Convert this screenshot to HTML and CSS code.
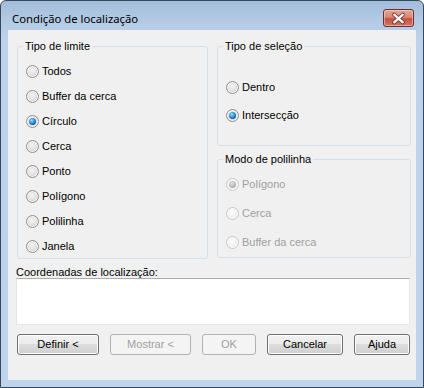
FILE: index.html
```html
<!DOCTYPE html>
<html lang="pt">
<head>
<meta charset="utf-8">
<title>Condição de localização</title>
<link rel="stylesheet" href="styles.css">
</head>
<body>
<div class="window">
  <div class="titlebar">
    <span class="title">Condição de localização</span>
    <span class="close">
      <svg width="30" height="17" viewBox="0 0 30 17">
        <path d="M10.5 4.5 L19.5 12.5 M19.5 4.5 L10.5 12.5" stroke="#6b3030" stroke-width="4" stroke-linecap="round" fill="none"/>
        <path d="M10.5 4.5 L19.5 12.5 M19.5 4.5 L10.5 12.5" stroke="#ffffff" stroke-width="2.2" stroke-linecap="round" fill="none"/>
      </svg>
    </span>
  </div>
  <div class="client">
    <div class="top">
      <div class="group g-limite">
        <span class="legend">Tipo de limite</span>
        <div class="opt"><span class="radio"></span>Todos</div>
        <div class="opt"><span class="radio"></span>Buffer da cerca</div>
        <div class="opt"><span class="radio checked"></span>Círculo</div>
        <div class="opt"><span class="radio"></span>Cerca</div>
        <div class="opt"><span class="radio"></span>Ponto</div>
        <div class="opt"><span class="radio"></span>Polígono</div>
        <div class="opt"><span class="radio"></span>Polilinha</div>
        <div class="opt"><span class="radio"></span>Janela</div>
      </div>
      <div class="col">
        <div class="group g-selecao">
          <span class="legend">Tipo de seleção</span>
          <div class="opt"><span class="radio"></span>Dentro</div>
          <div class="opt"><span class="radio checked"></span>Intersecção</div>
        </div>
        <div class="group g-modo">
          <span class="legend">Modo de polilinha</span>
          <div class="opt disabled"><span class="radio checked"></span>Polígono</div>
          <div class="opt disabled"><span class="radio"></span>Cerca</div>
          <div class="opt disabled"><span class="radio"></span>Buffer da cerca</div>
        </div>
      </div>
    </div>
    <div class="coord-label">Coordenadas de localização:</div>
    <div class="textbox"></div>
    <div class="buttons">
      <span class="btn b-definir">Definir &lt;</span>
      <span class="btn b-mostrar disabled">Mostrar &lt;</span>
      <span class="btn b-ok disabled">OK</span>
      <span class="btn b-cancelar">Cancelar</span>
      <span class="btn b-ajuda">Ajuda</span>
    </div>
  </div>
</div>
</body>
</html>
```

FILE: styles.css
```css
html, body {
  margin: 0;
  padding: 0;
  background: #ffffff;
}

body {
  width: 424px;
  height: 388px;
  font-family: "Liberation Sans", Arial, sans-serif;
  font-size: 11px;
  color: #000;
}

.window {
  box-sizing: border-box;
  width: 424px;
  height: 388px;
  border: 1px solid #36485c;
  border-radius: 6px 6px 0 0;
  background: linear-gradient(to bottom, #a3bcd9 0px, #b3cae4 20px, #bdd3ec 40px, #bed4ed 100%);
  display: flex;
  flex-direction: column;
}

.titlebar {
  height: 29px;
  display: flex;
  align-items: flex-start;
  justify-content: space-between;
  padding: 0 9px 0 11px;
}

.title {
  font-family: "Noto Sans", "Open Sans", sans-serif;
  font-size: 11.3px;
  line-height: 16px;
  margin-top: 10px;
  color: #000;
}

.close {
  box-sizing: border-box;
  width: 31px;
  height: 18px;
  margin-top: 8px;
  border: 1px solid #6a2f2f;
  border-radius: 3px;
  background: linear-gradient(to bottom, #e5a797 0%, #d88676 45%, #c6503f 55%, #d27566 100%);
  box-shadow: inset 0 0 0 1px rgba(255, 220, 210, 0.5);
  display: flex;
  align-items: center;
  justify-content: center;
}

.close svg {
  display: block;
}

.client {
  box-sizing: border-box;
  width: 408px;
  height: 350px;
  margin-left: 7px;
  background: #f0f0f0;
  padding: 16px 0 0 9px;
  position: relative;
}

.top {
  display: flex;
  gap: 9px;
}

.col {
  display: flex;
  flex-direction: column;
  gap: 13px;
}

.group {
  box-sizing: border-box;
  position: relative;
  border: 1px solid #d5dfe5;
  border-radius: 3px;
  padding-left: 8px;
}

.legend {
  position: absolute;
  top: -7px;
  left: 5px;
  padding: 0 2px;
  line-height: 13px;
  background: #f0f0f0;
}

.g-limite {
  width: 191px;
  height: 213px;
  padding-top: 12px;
}

.g-limite .opt {
  height: 25px;
}

.g-selecao {
  width: 194px;
  height: 100px;
  padding-top: 26px;
}

.g-selecao .opt {
  height: 28px;
}

.g-modo {
  width: 194px;
  height: 99px;
  padding-top: 10px;
}

.g-modo .opt {
  height: 29px;
}

.opt {
  display: flex;
  align-items: center;
  gap: 3px;
  line-height: 13px;
}

.opt.disabled {
  color: #a0a0a0;
}

.radio {
  box-sizing: border-box;
  width: 13px;
  height: 13px;
  border-radius: 50%;
  border: 1px solid #8f8f8f;
  background: radial-gradient(circle at 45% 40%, #f4f4f4 0%, #e2e2e2 45%, #d2d2d2 70%, #f0f0f0 100%);
  box-shadow: inset 0 0 0 1px #f6f6f6;
  position: relative;
  flex: none;
}

.radio.checked::after {
  content: "";
  position: absolute;
  left: 2px;
  top: 2px;
  width: 7px;
  height: 7px;
  border-radius: 50%;
  background: radial-gradient(circle at 40% 35%, #9be0ff 0%, #2f8fd8 45%, #0d4f94 80%, #0a3563 100%);
}

.opt.disabled .radio {
  border-color: #c6c6c6;
  background: radial-gradient(circle at 45% 40%, #fbfbfb 0%, #efefef 60%, #f6f6f6 100%);
  box-shadow: inset 0 0 0 1px #fafafa;
}

.opt.disabled .radio.checked::after {
  background: radial-gradient(circle at 40% 35%, #e0e0e0 0%, #b8b8b8 55%, #9a9a9a 100%);
}

.coord-label {
  margin-top: 7px;
  margin-left: -1px;
  line-height: 12px;
}

.textbox {
  box-sizing: border-box;
  width: 394px;
  height: 47px;
  margin-left: -1px;
  background: #ffffff;
  border: 1px solid;
  border-color: #abadb3 #e3e9ef #e3e9ef #e2e3ea;
}

.buttons {
  display: flex;
  gap: 11px;
  margin-top: 9px;
}

.btn {
  box-sizing: border-box;
  height: 21px;
  border: 1px solid #707070;
  border-radius: 3px;
  background: linear-gradient(to bottom, #f2f2f2 0%, #ebebeb 50%, #dddddd 50%, #cfcfcf 100%);
  box-shadow: inset 0 0 0 1px #fcfcfc;
  display: flex;
  align-items: center;
  justify-content: center;
  line-height: 13px;
}

.btn.disabled {
  border-color: #adb2b5;
  background: #f4f4f4;
  box-shadow: none;
  color: #a0a0a0;
}

.b-definir { width: 82px; }
.b-mostrar { width: 81px; }
.b-ok { width: 54px; }
.b-cancelar { width: 76px; }
.b-ajuda { width: 56px; }
```
